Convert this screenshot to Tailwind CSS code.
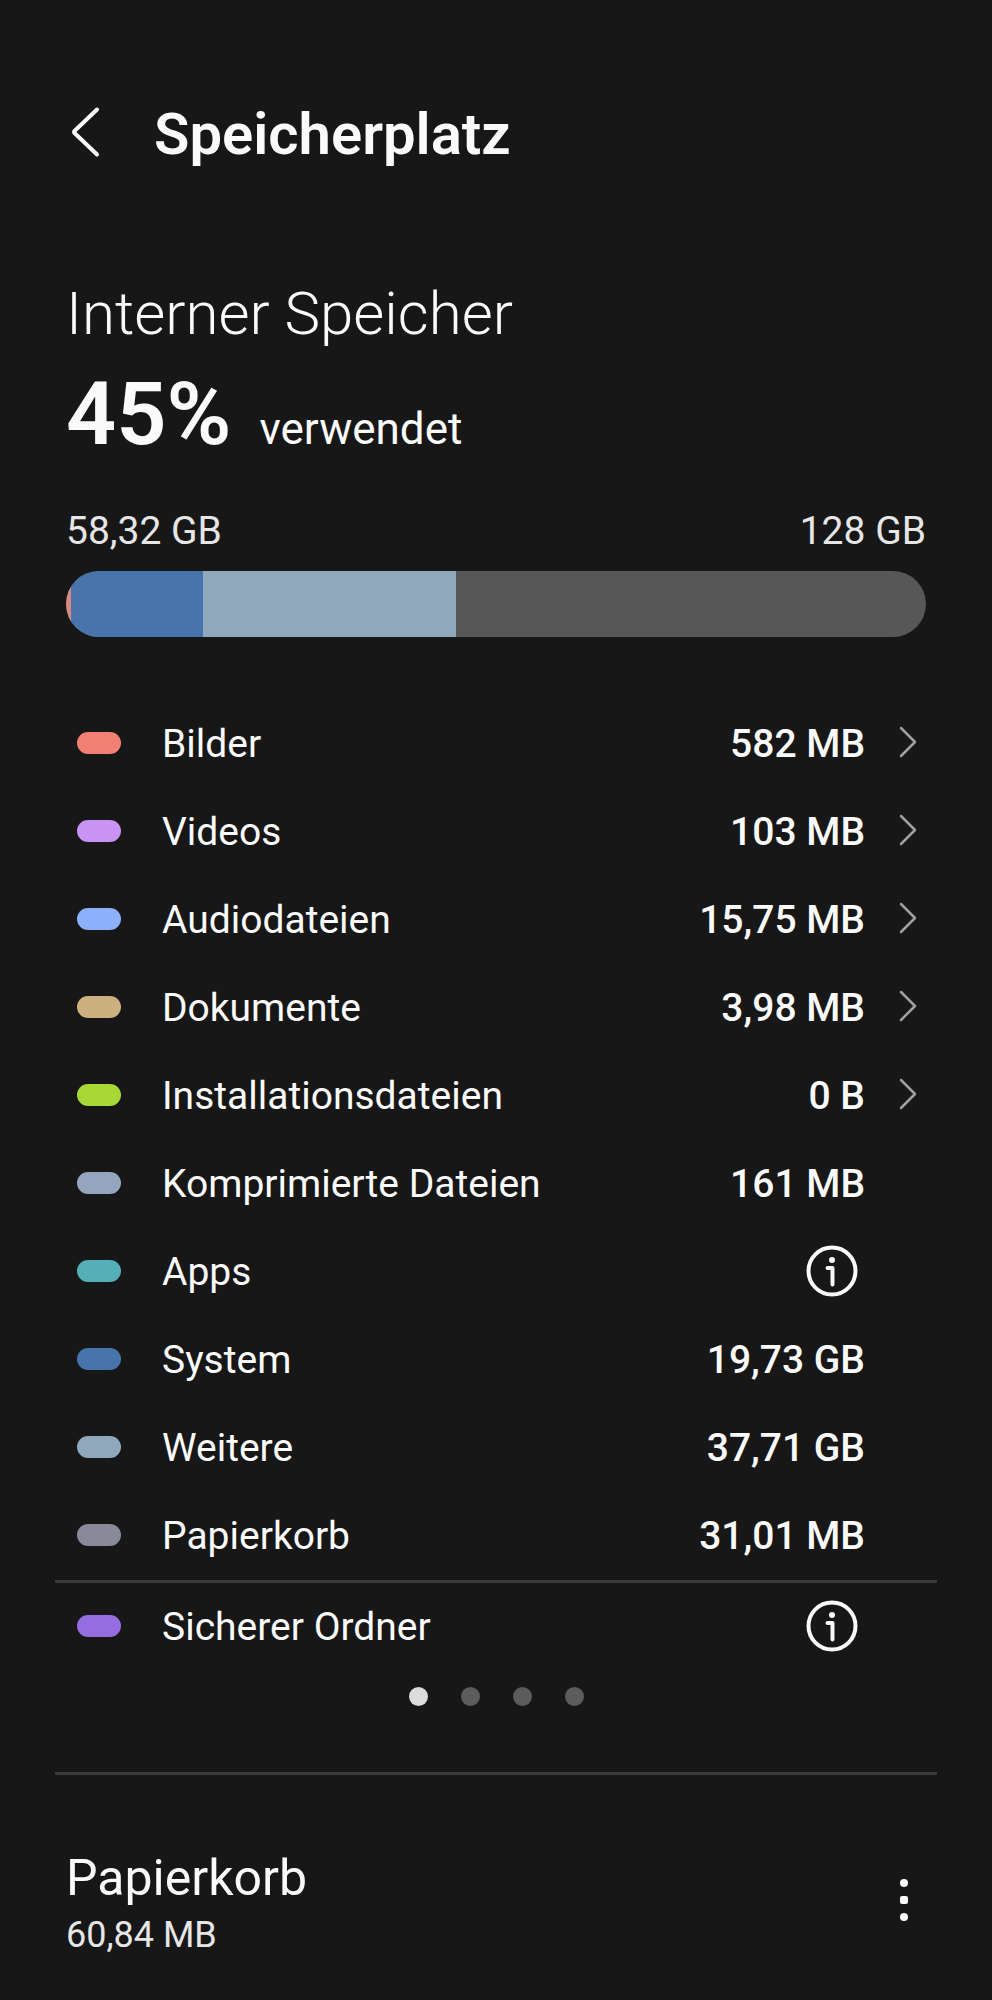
<!DOCTYPE html>
<html lang="de">
<head>
  <meta charset="UTF-8" />
  <meta name="viewport" content="width=device-width, initial-scale=1.0"/>
  <title>Speicherplatz</title>
  <script src="https://cdn.jsdelivr.net/npm/@tailwindcss/browser@4"></script>
</head>
<body class="bg-[#171717] text-[#fafafa] font-[Roboto,sans-serif] min-h-screen px-[55px] pt-[98px] pb-8">
  <header class="flex items-center h-[72px] px-[11px]">
    <button aria-label="Zurück" class="w-[88px] h-[72px]">
      <svg class="w-[40px] h-[72px]" viewBox="0 0 40 72" fill="none" stroke="currentColor" stroke-width="4" stroke-linecap="round" stroke-linejoin="round"><path d="M31 11.500L8.500 33Q7.500 34 8.500 35L31 56.500"/></svg>
    </button>
    <h1 class="text-[58px] leading-[72px] font-semibold">Speicherplatz</h1>
  </header>

  <main>
    <section class="px-[11px] pt-[108px]">
      <h2 class="text-[60px] leading-[72px] font-light">Interner Speicher</h2>
      <p class="flex items-baseline gap-7 mt-4">
        <span class="text-[88px] leading-[96px] font-semibold">45%</span>
        <span class="text-[44px]">verwendet</span>
      </p>
      <div class="flex justify-between mt-[45px] text-[39px] leading-[48px] text-[#e6e6e6]">
        <span>58,32 GB</span>
        <span>128 GB</span>
      </div>
      <div class="flex h-[66px] mt-4 rounded-full overflow-hidden bg-[#575757]">
        <div class="bg-[#d98886]" style="width: 0.6%"></div>
        <div class="bg-[#4674ab]" style="width: 15.3%"></div>
        <div class="bg-[#8fa8bb]" style="width: 29.5%"></div>
      </div>
    </section>

    <ul class="mt-[63px] px-[11px] text-[39px]">
      <li><a href="#" class="flex items-center h-[88px] pl-[11px]">
        <span class="w-11 h-[22px] mb-[3px] mr-[41px] rounded-full bg-[#f28072]"></span>
        <span class="flex-1">Bilder</span>
        <span class="font-medium">582 MB</span>
        <svg class="w-[61px] h-11" viewBox="0 0 61 44" fill="none" stroke="#a0a0a0" stroke-width="2.500" stroke-linecap="round" stroke-linejoin="round"><path d="M36 6L50 20L36 34"/></svg>
      </a></li>
      <li><a href="#" class="flex items-center h-[88px] pl-[11px]">
        <span class="w-11 h-[22px] mb-[3px] mr-[41px] rounded-full bg-[#c893f2]"></span>
        <span class="flex-1">Videos</span>
        <span class="font-medium">103 MB</span>
        <svg class="w-[61px] h-11" viewBox="0 0 61 44" fill="none" stroke="#a0a0a0" stroke-width="2.500" stroke-linecap="round" stroke-linejoin="round"><path d="M36 6L50 20L36 34"/></svg>
      </a></li>
      <li><a href="#" class="flex items-center h-[88px] pl-[11px]">
        <span class="w-11 h-[22px] mb-[3px] mr-[41px] rounded-full bg-[#8cb0fb]"></span>
        <span class="flex-1">Audiodateien</span>
        <span class="font-medium">15,75 MB</span>
        <svg class="w-[61px] h-11" viewBox="0 0 61 44" fill="none" stroke="#a0a0a0" stroke-width="2.500" stroke-linecap="round" stroke-linejoin="round"><path d="M36 6L50 20L36 34"/></svg>
      </a></li>
      <li><a href="#" class="flex items-center h-[88px] pl-[11px]">
        <span class="w-11 h-[22px] mb-[3px] mr-[41px] rounded-full bg-[#cdb080]"></span>
        <span class="flex-1">Dokumente</span>
        <span class="font-medium">3,98 MB</span>
        <svg class="w-[61px] h-11" viewBox="0 0 61 44" fill="none" stroke="#a0a0a0" stroke-width="2.500" stroke-linecap="round" stroke-linejoin="round"><path d="M36 6L50 20L36 34"/></svg>
      </a></li>
      <li><a href="#" class="flex items-center h-[88px] pl-[11px]">
        <span class="w-11 h-[22px] mb-[3px] mr-[41px] rounded-full bg-[#a8d835]"></span>
        <span class="flex-1">Installationsdateien</span>
        <span class="font-medium">0 B</span>
        <svg class="w-[61px] h-11" viewBox="0 0 61 44" fill="none" stroke="#a0a0a0" stroke-width="2.500" stroke-linecap="round" stroke-linejoin="round"><path d="M36 6L50 20L36 34"/></svg>
      </a></li>
      <li class="flex items-center h-[88px] pl-[11px] pr-[61px]">
        <span class="w-11 h-[22px] mb-[3px] mr-[41px] rounded-full bg-[#93a6bd]"></span>
        <span class="flex-1">Komprimierte Dateien</span>
        <span class="font-medium">161 MB</span>
      </li>
      <li class="flex items-center h-[88px] pl-[11px] pr-[61px]">
        <span class="w-11 h-[22px] mb-[3px] mr-[41px] rounded-full bg-[#55afb8]"></span>
        <span class="flex-1">Apps</span>
        <button aria-label="Info zu Apps" class="mr-[6px]">
          <svg class="w-[54px] h-[54px]" viewBox="0 0 54 54" fill="none" stroke="currentColor" stroke-width="4" stroke-linecap="round" stroke-linejoin="round"><circle cx="27" cy="26" r="23.500"/><circle cx="27" cy="15" r="3" fill="currentColor" stroke="none"/><path d="M22.500 23H27.500V39.500"/></svg>
        </button>
      </li>
      <li class="flex items-center h-[88px] pl-[11px] pr-[61px]">
        <span class="w-11 h-[22px] mb-[3px] mr-[41px] rounded-full bg-[#4674ab]"></span>
        <span class="flex-1">System</span>
        <span class="font-medium">19,73 GB</span>
      </li>
      <li class="flex items-center h-[88px] pl-[11px] pr-[61px]">
        <span class="w-11 h-[22px] mb-[3px] mr-[41px] rounded-full bg-[#8fa8bb]"></span>
        <span class="flex-1">Weitere</span>
        <span class="font-medium">37,71 GB</span>
      </li>
      <li class="flex items-center h-[88px] pl-[11px] pr-[61px]">
        <span class="w-11 h-[22px] mb-[3px] mr-[41px] rounded-full bg-[#898999]"></span>
        <span class="flex-1">Papierkorb</span>
        <span class="font-medium">31,01 MB</span>
      </li>
    </ul>

    <hr class="border-t-3 border-[#3b3b3b]">

    <div class="flex items-center h-[88px] pl-[22px] pr-[72px] text-[39px]">
      <span class="w-11 h-[22px] mb-[3px] mr-[41px] rounded-full bg-[#946ee0]"></span>
      <span class="flex-1">Sicherer Ordner</span>
      <button aria-label="Info zu Sicherer Ordner" class="mr-[6px]">
        <svg class="w-[54px] h-[54px]" viewBox="0 0 54 54" fill="none" stroke="currentColor" stroke-width="4" stroke-linecap="round" stroke-linejoin="round"><circle cx="27" cy="26" r="23.500"/><circle cx="27" cy="15" r="3" fill="currentColor" stroke="none"/><path d="M22.500 23H27.500V39.500"/></svg>
      </button>
    </div>

    <!-- Seitenanzeige -->
    <div class="flex justify-center gap-[33px] mt-4">
      <button aria-label="Seite 1" class="size-[19px] rounded-full bg-[#dcdcdc]"></button>
      <button aria-label="Seite 2" class="size-[19px] rounded-full bg-[#5c5c5c]"></button>
      <button aria-label="Seite 3" class="size-[19px] rounded-full bg-[#5c5c5c]"></button>
      <button aria-label="Seite 4" class="size-[19px] rounded-full bg-[#5c5c5c]"></button>
    </div>

    <hr class="mt-[66px] border-t-3 border-[#3b3b3b]">

    <section class="flex items-center justify-between px-[11px] pt-[73px]">
      <div>
        <h2 class="text-[50px] leading-[60px]">Papierkorb</h2>
        <p class="mt-[5px] text-[36px] leading-[44px] text-[#e6e6e6]">60,84 MB</p>
      </div>
      <button aria-label="Weitere Optionen">
        <svg class="w-11 h-[60px]" viewBox="0 0 44 60" fill="currentColor"><circle cx="22" cy="10" r="4"/><rect x="18" y="23" width="8" height="8" rx="2"/><circle cx="22" cy="44" r="4"/></svg>
      </button>
    </section>
  </main>
</body>
</html>
